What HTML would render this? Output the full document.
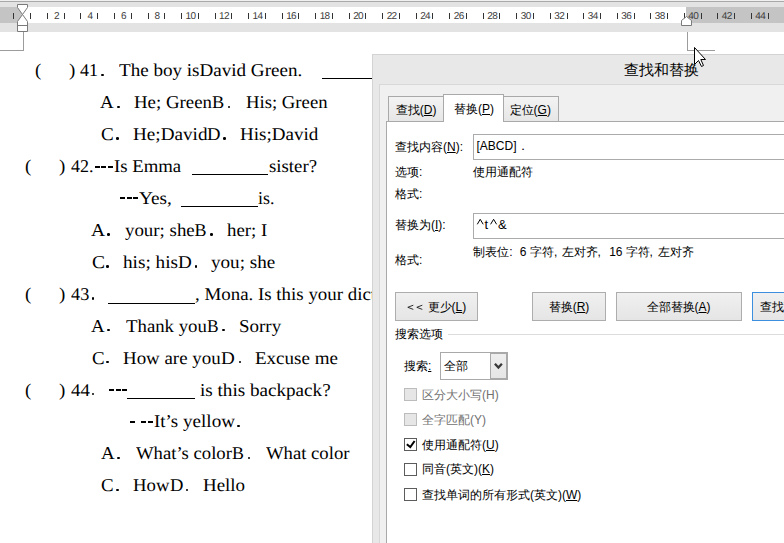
<!DOCTYPE html>
<html><head><meta charset="utf-8">
<style>
*{margin:0;padding:0;box-sizing:border-box}
html,body{width:784px;height:543px;overflow:hidden;background:#fff}
body{position:relative}
.a{position:absolute}
.rn{position:absolute;font-family:"Liberation Sans",sans-serif;font-size:10px;color:#3c3c3c;line-height:10px;white-space:nowrap;top:11.5px;width:20px;text-align:center;letter-spacing:-0.6px;text-indent:0.6px;text-rendering:geometricPrecision}
.tk{position:absolute;width:1px;height:6px;top:13px;background:#333}
.d{position:absolute;font-family:"Liberation Serif",serif;font-size:18px;line-height:22px;color:#000;white-space:nowrap;text-rendering:geometricPrecision}
.ul{position:absolute;height:1px;background:#000}
.t{position:absolute;font-family:"Liberation Sans",sans-serif;font-size:12px;line-height:16px;color:#000;white-space:nowrap}
.u{text-decoration:underline;text-underline-offset:1px}
.btn{position:absolute;border:1px solid #adadad;background:linear-gradient(#f0f0f0,#e5e5e5);top:292px;height:29px}
.cb{position:absolute;left:404px;width:13px;height:13px;border:1px solid #5c5c5c;background:#fff}
.cbd{border-color:#bcbcbc;background:#e6e6e6}
.dis{color:#707070}
</style></head><body>

<div class="a" style="left:0px;top:0px;width:784px;height:1px;background:#f0f0f0;"></div>
<div class="a" style="left:0px;top:1px;width:784px;height:1px;background:#a9a9a9;"></div>
<div class="a" style="left:0px;top:2px;width:784px;height:5px;background:#e3e3e3;"></div>
<div class="a" style="left:0px;top:7px;width:784px;height:16px;background:#fff;"></div>
<div class="a" style="left:0px;top:7px;width:22.5px;height:16px;background:#c4c4c4;"></div>
<div class="a" style="left:686px;top:7px;width:98px;height:16px;background:#c4c4c4;"></div>
<div class="a" style="left:0px;top:23px;width:784px;height:9px;background:#e3e3e3;"></div>
<div class="tk" style="left:13.4px"></div>
<div class="tk" style="left:30.2px"></div>
<div class="tk" style="left:46.9px"></div>
<div class="tk" style="left:63.7px"></div>
<div class="tk" style="left:80.4px"></div>
<div class="tk" style="left:97.2px"></div>
<div class="tk" style="left:114.0px"></div>
<div class="tk" style="left:130.7px"></div>
<div class="tk" style="left:147.5px"></div>
<div class="tk" style="left:164.2px"></div>
<div class="tk" style="left:181.0px"></div>
<div class="tk" style="left:197.8px"></div>
<div class="tk" style="left:214.5px"></div>
<div class="tk" style="left:231.3px"></div>
<div class="tk" style="left:248.0px"></div>
<div class="tk" style="left:264.8px"></div>
<div class="tk" style="left:281.6px"></div>
<div class="tk" style="left:298.3px"></div>
<div class="tk" style="left:315.1px"></div>
<div class="tk" style="left:331.8px"></div>
<div class="tk" style="left:348.6px"></div>
<div class="tk" style="left:365.4px"></div>
<div class="tk" style="left:382.1px"></div>
<div class="tk" style="left:398.9px"></div>
<div class="tk" style="left:415.6px"></div>
<div class="tk" style="left:432.4px"></div>
<div class="tk" style="left:449.2px"></div>
<div class="tk" style="left:465.9px"></div>
<div class="tk" style="left:482.7px"></div>
<div class="tk" style="left:499.4px"></div>
<div class="tk" style="left:516.2px"></div>
<div class="tk" style="left:533.0px"></div>
<div class="tk" style="left:549.7px"></div>
<div class="tk" style="left:566.5px"></div>
<div class="tk" style="left:583.2px"></div>
<div class="tk" style="left:600.0px"></div>
<div class="tk" style="left:616.8px"></div>
<div class="tk" style="left:633.5px"></div>
<div class="tk" style="left:650.3px"></div>
<div class="tk" style="left:667.0px"></div>
<div class="tk" style="left:683.8px"></div>
<div class="tk" style="left:700.6px"></div>
<div class="tk" style="left:717.3px"></div>
<div class="tk" style="left:734.1px"></div>
<div class="tk" style="left:750.8px"></div>
<div class="tk" style="left:767.6px"></div>
<div class="rn" style="left:46.1px">2</div>
<div class="rn" style="left:79.6px">4</div>
<div class="rn" style="left:113.2px">6</div>
<div class="rn" style="left:146.7px">8</div>
<div class="rn" style="left:180.2px">10</div>
<div class="rn" style="left:213.7px">12</div>
<div class="rn" style="left:247.2px">14</div>
<div class="rn" style="left:280.8px">16</div>
<div class="rn" style="left:314.3px">18</div>
<div class="rn" style="left:347.8px">20</div>
<div class="rn" style="left:381.3px">22</div>
<div class="rn" style="left:414.8px">24</div>
<div class="rn" style="left:448.4px">26</div>
<div class="rn" style="left:481.9px">28</div>
<div class="rn" style="left:515.4px">30</div>
<div class="rn" style="left:548.9px">32</div>
<div class="rn" style="left:582.4px">34</div>
<div class="rn" style="left:616.0px">36</div>
<div class="rn" style="left:649.5px">38</div>
<div class="rn" style="left:683.0px">40</div>
<div class="rn" style="left:716.5px">42</div>
<div class="rn" style="left:750.0px">44</div>
<svg class="a" style="left:0;top:0" width="784" height="60">
<g fill="#fff" stroke="#7a7a7a" stroke-width="1">
<path d="M17.5 4.5 H27.5 V7.5 L22.5 14.5 L17.5 7.5 Z"/>
<path d="M22.5 14.5 L27.5 21.5 V31.5 H17.5 V21.5 Z"/>
<path d="M17.5 25.5 H27.5"/>
<path d="M681.5 25.5 V20.5 L686.5 16.5 L691.5 20.5 V25.5 Z"/>
</g>
</svg>
<div class="a" style="left:23px;top:32px;width:1px;height:18px;background:#9c9c9c;"></div>
<div class="a" style="left:0px;top:50px;width:24px;height:1px;background:#9c9c9c;"></div>
<div class="a" style="left:687px;top:32px;width:1px;height:18px;background:#9c9c9c;"></div>
<div class="a" style="left:687px;top:50px;width:28px;height:1px;background:#9c9c9c;"></div>
<div class="d" style="left:34.50px;top:59.30px;transform:scaleX(1.0500);transform-origin:0 0;">(</div>
<div class="d" style="left:69.00px;top:59.30px;transform:scaleX(1.0500);transform-origin:0 0;">)</div>
<div class="d" style="left:80.10px;top:59.30px;">41</div>
<div class="d" style="left:118.80px;top:59.30px;transform:scaleX(1.0593);transform-origin:0 0;">The boy isDavid Green.</div>
<div class="d" style="left:100.40px;top:91.22px;transform:scaleX(1.0538);transform-origin:0 0;">A</div>
<div class="d" style="left:133.80px;top:91.22px;transform:scaleX(1.0467);transform-origin:0 0;">He; Green</div>
<div class="d" style="left:211.80px;top:91.22px;transform:scaleX(1.0167);transform-origin:0 0;">B</div>
<div class="d" style="left:245.50px;top:91.22px;transform:scaleX(1.0392);transform-origin:0 0;">His; Green</div>
<div class="d" style="left:101.25px;top:123.14px;transform:scaleX(1.0591);transform-origin:0 0;">C</div>
<div class="d" style="left:132.50px;top:123.14px;transform:scaleX(1.0643);transform-origin:0 0;">He;David</div>
<div class="d" style="left:207.30px;top:123.14px;transform:scaleX(1.0385);transform-origin:0 0;">D</div>
<div class="d" style="left:240.20px;top:123.14px;transform:scaleX(1.0581);transform-origin:0 0;">His;David</div>
<div class="d" style="left:24.80px;top:155.06px;transform:scaleX(1.0500);transform-origin:0 0;">(</div>
<div class="d" style="left:58.90px;top:155.06px;transform:scaleX(1.0500);transform-origin:0 0;">)</div>
<div class="d" style="left:71.00px;top:155.06px;">42.</div>
<div class="d" style="left:114.00px;top:155.06px;transform:scaleX(1.0415);transform-origin:0 0;">Is Emma</div>
<div class="d" style="left:268.70px;top:155.06px;transform:scaleX(1.0435);transform-origin:0 0;">sister?</div>
<div class="d" style="left:138.70px;top:186.98px;transform:scaleX(1.0700);transform-origin:0 0;">Yes,</div>
<div class="d" style="left:258.30px;top:186.98px;transform:scaleX(0.9937);transform-origin:0 0;">is.</div>
<div class="d" style="left:91.10px;top:218.90px;transform:scaleX(1.0846);transform-origin:0 0;">A</div>
<div class="d" style="left:124.50px;top:218.90px;transform:scaleX(1.0485);transform-origin:0 0;">your; she</div>
<div class="d" style="left:194.60px;top:218.90px;">B</div>
<div class="d" style="left:227.30px;top:218.90px;transform:scaleX(1.0474);transform-origin:0 0;">her; I</div>
<div class="d" style="left:91.60px;top:250.82px;transform:scaleX(1.0818);transform-origin:0 0;">C</div>
<div class="d" style="left:123.00px;top:250.82px;transform:scaleX(1.0686);transform-origin:0 0;">his; his</div>
<div class="d" style="left:177.80px;top:250.82px;transform:scaleX(1.0615);transform-origin:0 0;">D</div>
<div class="d" style="left:211.20px;top:250.82px;transform:scaleX(1.0617);transform-origin:0 0;">you; she</div>
<div class="d" style="left:24.50px;top:282.74px;transform:scaleX(1.0500);transform-origin:0 0;">(</div>
<div class="d" style="left:58.60px;top:282.74px;transform:scaleX(1.0500);transform-origin:0 0;">)</div>
<div class="d" style="left:70.50px;top:282.74px;transform:scaleX(1.0139);transform-origin:0 0;">43</div>
<div class="d" style="left:195.30px;top:282.74px;transform:scaleX(1.0500);transform-origin:0 0;">, Mona. Is this your dictionary</div>
<div class="d" style="left:91.10px;top:314.66px;transform:scaleX(1.0500);transform-origin:0 0;">A</div>
<div class="d" style="left:125.60px;top:314.66px;transform:scaleX(1.0442);transform-origin:0 0;">Thank you</div>
<div class="d" style="left:206.80px;top:314.66px;transform:scaleX(0.9667);transform-origin:0 0;">B</div>
<div class="d" style="left:238.55px;top:314.66px;transform:scaleX(1.0538);transform-origin:0 0;">Sorry</div>
<div class="d" style="left:91.60px;top:346.58px;transform:scaleX(1.0500);transform-origin:0 0;">C</div>
<div class="d" style="left:123.00px;top:346.58px;transform:scaleX(1.0495);transform-origin:0 0;">How are you</div>
<div class="d" style="left:221.10px;top:346.58px;transform:scaleX(1.0615);transform-origin:0 0;">D</div>
<div class="d" style="left:255.40px;top:346.58px;transform:scaleX(1.0564);transform-origin:0 0;">Excuse me</div>
<div class="d" style="left:24.50px;top:378.50px;transform:scaleX(1.0500);transform-origin:0 0;">(</div>
<div class="d" style="left:58.60px;top:378.50px;transform:scaleX(1.0500);transform-origin:0 0;">)</div>
<div class="d" style="left:70.80px;top:378.50px;transform:scaleX(1.0500);transform-origin:0 0;">44</div>
<div class="d" style="left:199.90px;top:378.50px;transform:scaleX(1.0626);transform-origin:0 0;">is this backpack?</div>
<div class="d" style="left:153.80px;top:410.42px;transform:scaleX(1.0500);transform-origin:0 0;">It’s</div>
<div class="d" style="left:182.60px;top:410.42px;transform:scaleX(1.0612);transform-origin:0 0;">yellow</div>
<div class="d" style="left:101.10px;top:442.34px;transform:scaleX(1.0500);transform-origin:0 0;">A</div>
<div class="d" style="left:135.60px;top:442.34px;transform:scaleX(1.0366);transform-origin:0 0;">What’s color</div>
<div class="d" style="left:232.20px;top:442.34px;transform:scaleX(0.9917);transform-origin:0 0;">B</div>
<div class="d" style="left:265.80px;top:442.34px;transform:scaleX(1.0370);transform-origin:0 0;">What color</div>
<div class="d" style="left:101.10px;top:474.26px;transform:scaleX(1.0500);transform-origin:0 0;">C</div>
<div class="d" style="left:133.00px;top:474.26px;transform:scaleX(1.0400);transform-origin:0 0;">How</div>
<div class="d" style="left:169.60px;top:474.26px;transform:scaleX(1.0308);transform-origin:0 0;">D</div>
<div class="d" style="left:202.90px;top:474.26px;transform:scaleX(1.0525);transform-origin:0 0;">Hello</div>
<div class="a" style="left:101.45px;top:73.60px;width:2.5px;height:2.5px;border-radius:50%;background:#000"></div>
<div class="a" style="left:117.05px;top:105.52px;width:2.5px;height:2.5px;border-radius:50%;background:#000"></div>
<div class="a" style="left:227.95px;top:105.52px;width:2.5px;height:2.5px;border-radius:50%;background:#000"></div>
<div class="a" style="left:116.25px;top:137.44px;width:2.5px;height:2.5px;border-radius:50%;background:#000"></div>
<div class="a" style="left:223.15px;top:137.44px;width:2.5px;height:2.5px;border-radius:50%;background:#000"></div>
<div class="a" style="left:107.35px;top:233.20px;width:2.5px;height:2.5px;border-radius:50%;background:#000"></div>
<div class="a" style="left:210.15px;top:233.20px;width:2.5px;height:2.5px;border-radius:50%;background:#000"></div>
<div class="a" style="left:106.45px;top:265.12px;width:2.5px;height:2.5px;border-radius:50%;background:#000"></div>
<div class="a" style="left:194.55px;top:265.12px;width:2.5px;height:2.5px;border-radius:50%;background:#000"></div>
<div class="a" style="left:91.95px;top:297.04px;width:2.5px;height:2.5px;border-radius:50%;background:#000"></div>
<div class="a" style="left:107.35px;top:328.96px;width:2.5px;height:2.5px;border-radius:50%;background:#000"></div>
<div class="a" style="left:222.05px;top:328.96px;width:2.5px;height:2.5px;border-radius:50%;background:#000"></div>
<div class="a" style="left:106.45px;top:360.88px;width:2.5px;height:2.5px;border-radius:50%;background:#000"></div>
<div class="a" style="left:238.55px;top:360.88px;width:2.5px;height:2.5px;border-radius:50%;background:#000"></div>
<div class="a" style="left:91.95px;top:392.80px;width:2.5px;height:2.5px;border-radius:50%;background:#000"></div>
<div class="a" style="left:237.15px;top:424.72px;width:2.5px;height:2.5px;border-radius:50%;background:#000"></div>
<div class="a" style="left:117.35px;top:456.64px;width:2.5px;height:2.5px;border-radius:50%;background:#000"></div>
<div class="a" style="left:247.95px;top:456.64px;width:2.5px;height:2.5px;border-radius:50%;background:#000"></div>
<div class="a" style="left:116.45px;top:488.56px;width:2.5px;height:2.5px;border-radius:50%;background:#000"></div>
<div class="a" style="left:185.85px;top:488.56px;width:2.5px;height:2.5px;border-radius:50%;background:#000"></div>
<div class="ul" style="left:95.1px;top:166px;width:4.9px;height:2px"></div>
<div class="ul" style="left:101.2px;top:166px;width:4.9px;height:2px"></div>
<div class="ul" style="left:107.9px;top:166px;width:4.9px;height:2px"></div>
<div class="ul" style="left:120.4px;top:197px;width:4.9px;height:2px"></div>
<div class="ul" style="left:126.9px;top:197px;width:4.9px;height:2px"></div>
<div class="ul" style="left:133.2px;top:197px;width:4.9px;height:2px"></div>
<div class="ul" style="left:109.2px;top:389px;width:4.9px;height:2px"></div>
<div class="ul" style="left:115.9px;top:389px;width:4.9px;height:2px"></div>
<div class="ul" style="left:122.0px;top:389px;width:4.9px;height:2px"></div>
<div class="ul" style="left:129.9px;top:421px;width:4.9px;height:2px"></div>
<div class="ul" style="left:141.1px;top:421px;width:4.9px;height:2px"></div>
<div class="ul" style="left:147.8px;top:421px;width:4.9px;height:2px"></div>
<div class="ul" style="left:322px;top:78px;width:50.0px"></div>
<div class="ul" style="left:192.3px;top:173.6px;width:75.8px"></div>
<div class="ul" style="left:181.2px;top:205.8px;width:76.7px"></div>
<div class="ul" style="left:108.2px;top:303.0px;width:86.8px"></div>
<div class="ul" style="left:127.4px;top:397.8px;width:67.7px"></div>
<div class="a" style="left:372px;top:54px;width:420px;height:500px;background:#e8e8e8;border-left:1px solid #d3d3d3;border-top:1px solid #d3d3d3"></div>
<div class="t" style="left:624.2px;top:61.5px;font-size:15px;line-height:20px;top:59.5px">查找和替换</div>
<div class="a" style="left:379px;top:84px;width:420px;height:500px;background:#f0f0f0;border-left:1px solid #d8d8d8;border-top:1px solid #d8d8d8"></div>
<div class="a" style="left:388px;top:96px;width:56px;height:26px;background:linear-gradient(#f3f3f3,#e6e6e6);border:1px solid #a9a9a9;border-bottom:none"></div>
<div class="a" style="left:503px;top:96px;width:56px;height:26px;background:linear-gradient(#f3f3f3,#e6e6e6);border:1px solid #a9a9a9;border-bottom:none"></div>
<div class="a" style="left:386px;top:121px;width:420px;height:500px;background:#fff;border-left:1px solid #a9a9a9;border-top:1px solid #a9a9a9"></div>
<div class="a" style="left:443px;top:94px;width:61px;height:28px;background:#fff;border:1px solid #a9a9a9;border-bottom:none"></div>
<div class="t" style="left:395.8px;top:101.7px;">查找(<span class="u">D</span>)</div>
<div class="t" style="left:454px;top:100.7px;">替换(<span class="u">P</span>)</div>
<div class="t" style="left:509.6px;top:101.7px;">定位(<span class="u">G</span>)</div>
<div class="t" style="left:395px;top:139.0px;">查找内容(<span class="u">N</span>):</div>
<div class="a" style="left:473px;top:134px;width:320px;height:26px;background:#fff;border:1px solid #ababab"></div>
<div class="t" style="left:476.5px;top:138.0px;">[ABCD]．</div>
<div class="t" style="left:395px;top:164.0px;">选项:</div>
<div class="t" style="left:473px;top:163.8px;">使用通配符</div>
<div class="t" style="left:395px;top:186.0px;">格式:</div>
<div class="t" style="left:395px;top:217.0px;">替换为(<span class="u">I</span>):</div>
<div class="a" style="left:473px;top:213px;width:320px;height:26px;background:#fff;border:1px solid #ababab"></div>
<svg class="a" style="left:470px;top:214px" width="40" height="20"><path d="M477.3 225.3 L480.2 220.3 L483.2 225.3 M490.6 225.3 L493.6 220.3 L496.6 225.3" transform="translate(-470,-215)" fill="none" stroke="#000" stroke-width="1"/></svg>
<div class="t" style="left:484.6px;top:217.3px;font-size:13px">t</div>
<div class="t" style="left:497.9px;top:217.3px;font-size:13px;letter-spacing:0">&amp;</div>
<div class="t" style="left:473px;top:244.2px;">制表位</div>
<div class="t" style="left:509.3px;top:244.2px;">:</div>
<div class="t" style="left:519.8px;top:244.2px;">6</div>
<div class="t" style="left:530px;top:244.2px;">字符,</div>
<div class="t" style="left:561.5px;top:244.2px;">左对齐,</div>
<div class="t" style="left:609.2px;top:244.2px;">16</div>
<div class="t" style="left:625.5px;top:244.2px;">字符,</div>
<div class="t" style="left:657.7px;top:244.2px;">左对齐</div>
<div class="t" style="left:395px;top:251.8px;">格式:</div>
<div class="btn" style="left:395px;width:83px;border-color:#adadad"></div>
<div class="t" style="left:0px;top:298.5px;"></div>
<svg class="a" style="left:0;top:0" width="784" height="543"><path d="M413.3 305.2 L407.8 307.3 L413.3 309.4 M422.3 305.2 L416.8 307.3 L422.3 309.4" fill="none" stroke="#1a1a1a" stroke-width="0.9"/></svg>
<div class="t" style="left:427.6px;top:298.5px;">更少(<span class="u">L</span>)</div>
<div class="btn" style="left:532px;width:74px;border-color:#adadad"></div>
<div class="t" style="left:548.7px;top:298.5px;">替换(<span class="u">R</span>)</div>
<div class="btn" style="left:616px;width:126px;border-color:#adadad"></div>
<div class="t" style="left:646.5px;top:298.5px;">全部替换(<span class="u">A</span>)</div>
<div class="btn" style="left:752px;width:48px;border-color:#3c8fde"></div>
<div class="t" style="left:759.5px;top:298.5px;">查找下一处(<span class="u">F</span>)</div>
<div class="t" style="left:395px;top:326.0px;">搜索选项</div>
<div class="a" style="left:448px;top:334px;width:340px;height:1px;background:#dcdcdc;"></div>
<div class="t" style="left:404px;top:357.5px;">搜索<span class="u">:</span></div>
<div class="a" style="left:440px;top:352px;width:68px;height:28px;background:#fff;border:1px solid #a9a9a9"></div>
<div class="a" style="left:490px;top:353px;width:17px;height:26px;background:linear-gradient(#eeeeee,#e6e6e6);border:1px solid #a9a9a9"></div>
<svg class="a" style="left:493px;top:361px" width="12" height="10"><path d="M1.9 2.8 L5.4 6.6 L8.9 2.8" fill="none" stroke="#3a3a3a" stroke-width="2.3"/></svg>
<div class="t" style="left:444px;top:357.5px;">全部</div>
<div class="cb cbd" style="top:388.2px"></div>
<div class="t dis" style="left:422px;top:386.7px;">区分大小写(H)</div>
<div class="cb cbd" style="top:413.3px"></div>
<div class="t dis" style="left:422px;top:411.8px;">全字匹配(Y)</div>
<div class="cb" style="top:438.2px"></div>
<svg class="a" style="left:404px;top:438.2px" width="13" height="13"><path d="M2.8 6.3 L6.3 9.1 L10.6 3.0" fill="none" stroke="#000" stroke-width="2"/></svg>
<div class="t" style="left:422px;top:436.7px;">使用通配符(<span class="u">U</span>)</div>
<div class="cb" style="top:462.8px"></div>
<div class="t" style="left:422px;top:461.3px;">同音(英文)(<span class="u">K</span>)</div>
<div class="cb" style="top:488.1px"></div>
<div class="t" style="left:422px;top:486.6px;">查找单词的所有形式(英文)(<span class="u">W</span>)</div>
<svg class="a" style="left:693px;top:46px" width="16" height="22">
<path d="M1.5 1.5 V18.5 L5.5 14.5 L8.5 20.5 L10.5 19.5 L7.8 13.5 H12.5 Z" fill="#fff" stroke="#000" stroke-width="1" stroke-linejoin="miter"/>
</svg>
</body></html>
